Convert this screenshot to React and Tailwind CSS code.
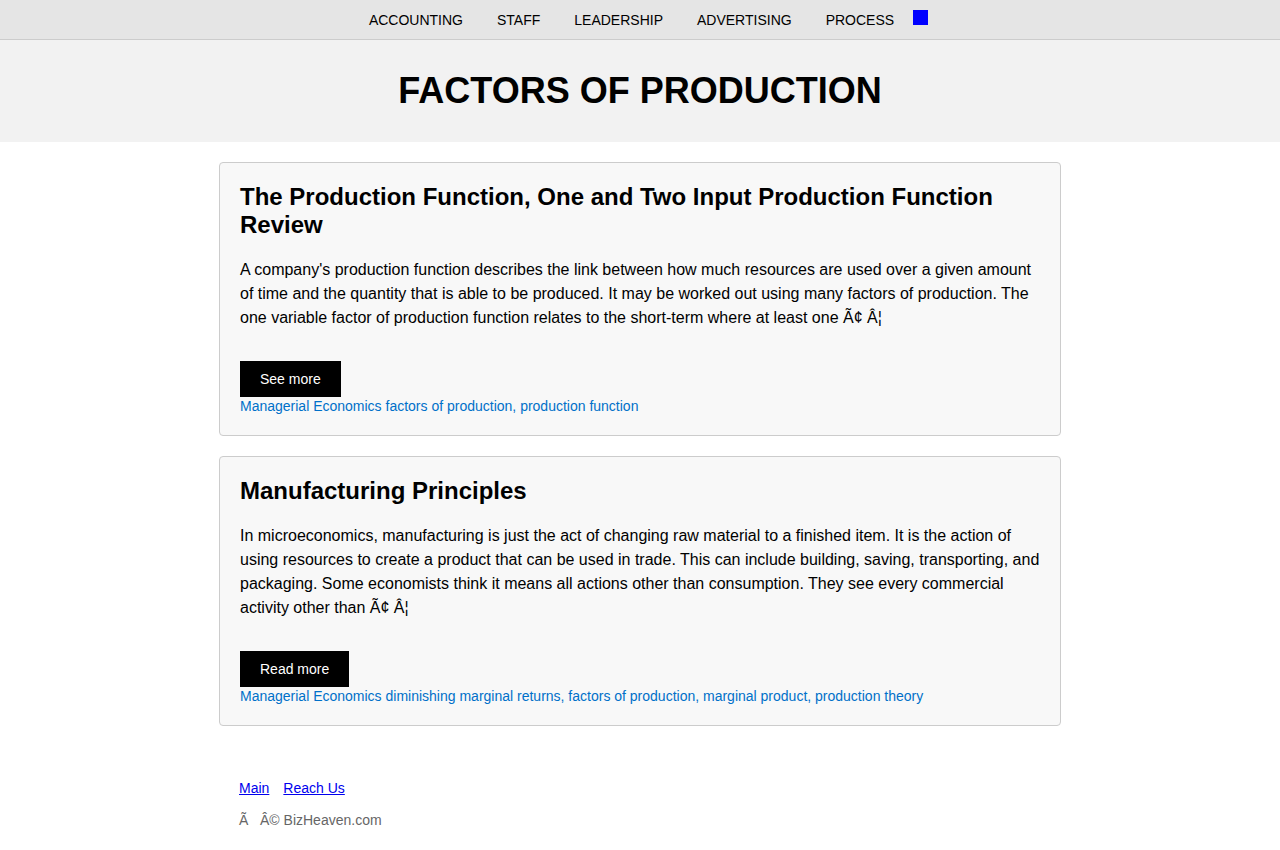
export default function App() {
  const navItems = ["ACCOUNTING", "STAFF", "LEADERSHIP", "ADVERTISING", "PROCESS"];
  const posts = [
    {
      title: "The Production Function, One and Two Input Production Function Review",
      body: "A company's production function describes the link between how much resources are used over a given amount of time and the quantity that is able to be produced. It may be worked out using many factors of production. The one variable factor of production function relates to the short-term where at least one \u00c3\u00a2 \u00c2\u00a6",
      button: "See more",
      tags: "Managerial Economics factors of production, production function",
    },
    {
      title: "Manufacturing Principles",
      body: "In microeconomics, manufacturing is just the act of changing raw material to a finished item. It is the action of using resources to create a product that can be used in trade. This can include building, saving, transporting, and packaging. Some economists think it means all actions other than consumption. They see every commercial activity other than \u00c3\u00a2 \u00c2\u00a6",
      button: "Read more",
      tags: "Managerial Economics diminishing marginal returns, factors of production, marginal product, production theory",
    },
  ];
  return (
    <div className="min-h-[850px] bg-white text-black" style={{ fontFamily: '"Liberation Sans", Arial, sans-serif' }}>
      <nav className="h-10 bg-[#e5e5e5] border-b border-[#cccccc] flex justify-center items-start">
        <div className="flex items-start">
          {navItems.map((n) => (
            <a key={n} className="text-[14px] leading-[40px] px-[17px] text-black">{n}</a>
          ))}
          <span className="w-[15px] h-[15px] bg-[#0000ff] mt-[10px] ml-[2px]" />
        </div>
      </nav>
      <header className="h-[102px] bg-[#f2f2f2] flex items-center justify-center">
        <h1 className="text-[36px] font-bold leading-[44px]">FACTORS OF PRODUCTION</h1>
      </header>
      <main className="w-[842px] mx-auto pt-5 flex flex-col gap-5">
        {posts.map((p) => (
          <article key={p.title} className="border border-[#cccccc] rounded bg-[#f8f8f8] px-5 pt-5 pb-5">
            <h2 className="text-[24px] font-bold leading-[28px]">{p.title}</h2>
            <p className="text-[16px] leading-[24px] mt-[19px]">{p.body}</p>
            <a className="inline-block bg-black text-white text-[14px] leading-[36px] h-9 px-5 mt-[31px]">{p.button}</a>
            <div className="text-[14px] leading-[18px] text-[#0070c9]">{p.tags}</div>
          </article>
        ))}
      </main>
      <footer className="w-[842px] mx-auto px-5 pt-[53px] pb-4">
        <div className="flex gap-[14px] text-[14px] leading-[18px]">
          <a className="text-[#0000ee] underline">Main</a>
          <a className="text-[#0000ee] underline">Reach Us</a>
        </div>
        <div className="text-[14px] leading-[18px] text-[#666666] mt-[14px]">{"\u00c3\u00a0\u00a0 \u00c2\u00a9 BizHeaven.com"}</div>
      </footer>
    </div>
  );
}
